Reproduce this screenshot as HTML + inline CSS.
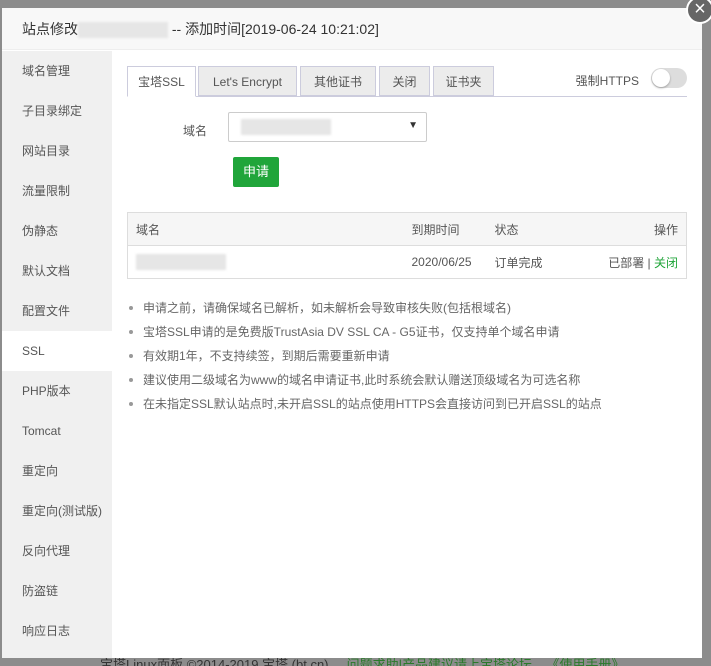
<!DOCTYPE html>
<html><head><meta charset="utf-8"><style>
*{box-sizing:border-box;margin:0;padding:0}
html,body{width:711px;height:666px;overflow:hidden}
body{background:#8c8c8c;font-family:"Liberation Sans","Noto Sans CJK SC",sans-serif;font-size:12px;color:#555;position:relative}
.modal{position:absolute;left:2px;top:8px;width:700px;height:650px;background:#fff;overflow:hidden}
.hd{height:42px;background:#f8f8f8;border-bottom:1px solid #eee;font-size:14px;color:#333;line-height:42px;padding-left:20px}
.blur{display:inline-block;width:90px;height:16px;background:#e6e6e6;vertical-align:middle;filter:blur(1px)}
.side{position:absolute;left:0;top:43px;width:110px;bottom:0;background:#f0f0f0}
.side div{height:40px;line-height:40px;padding-left:20px;font-size:12px;color:#555}
.side .on{background:#fff}
.main{position:absolute;left:125px;top:58px;width:560px;height:400px}
.tabs{height:31px;border-bottom:1px solid #ccd;position:relative}
.tab{position:absolute;top:0;height:30px;line-height:30px;text-align:center;border:1px solid #ccd;background:#ececec;font-size:12px;color:#555}
.tab.on{background:#fff;border-bottom-color:#fff;height:31px}
.sw{position:absolute;right:0;top:2px;width:36px;height:20px;border-radius:10px;background:#ddd}
.sw:after{content:"";position:absolute;left:1px;top:1px;width:18px;height:18px;border-radius:50%;background:#fff;box-shadow:0 1px 2px rgba(0,0,0,.3)}
table{border-collapse:collapse;width:560px;position:absolute;left:0;top:146px;border:1px solid #ddd}
td{height:33px;padding:0 8px;font-size:12px}
tr.h td{background:#f6f6f6;border-bottom:1px solid #ddd}
ul{position:absolute;left:0;top:235px;list-style:none}
li{height:24px;line-height:14px;padding-left:16px;position:relative;color:#666;font-size:12px}
li:before{content:"";position:absolute;left:2px;top:5px;width:4px;height:4px;border-radius:50%;background:#999}
.x{position:absolute;left:686px;top:-4px;width:28px;height:28px;border-radius:50%;background:#666;border:2px solid #fff;color:#fff;font-size:20px;line-height:22px;text-align:center}
</style></head><body>
<div style="position:absolute;left:0;top:655px;width:711px;height:11px;line-height:20px;font-size:13px;color:#333;padding-left:100px;overflow:hidden;white-space:nowrap">宝塔Linux面板 ©2014-2019 宝塔 (bt.cn) &nbsp;&nbsp;&nbsp;&nbsp;<span style="color:#2a7a2a">问题求助|产品建议请上宝塔论坛 &nbsp;&nbsp;&nbsp;《使用手册》</span></div>
<div class="modal">
<div class="hd">站点修改<span class="blur"></span> -- 添加时间[2019-06-24 10:21:02]</div>
<div class="side">
<div>域名管理</div><div>子目录绑定</div><div>网站目录</div><div>流量限制</div><div>伪静态</div><div>默认文档</div><div>配置文件</div><div class="on">SSL</div><div>PHP版本</div><div>Tomcat</div><div>重定向</div><div>重定向(测试版)</div><div>反向代理</div><div>防盗链</div><div>响应日志</div>
</div>
<div class="main">
<div class="tabs">
<div class="tab on" style="left:0;width:69px">宝塔SSL</div>
<div class="tab" style="left:71px;width:99px">Let's Encrypt</div>
<div class="tab" style="left:173px;width:76px">其他证书</div>
<div class="tab" style="left:252px;width:51px">关闭</div>
<div class="tab" style="left:306px;width:61px">证书夹</div>
<div style="position:absolute;right:48px;top:6px;color:#555">强制HTTPS</div>
<div class="sw"></div>
</div>
<div style="position:absolute;left:56px;top:56px;color:#555">域名</div>
<div style="position:absolute;left:101px;top:46px;width:199px;height:30px;border:1px solid #ccc;border-radius:2px"><span class="blur" style="margin:6px 0 0 12px;width:90px"></span><span style="position:absolute;right:8px;top:7px;font-size:10px;color:#333">▼</span></div>
<div style="position:absolute;left:106px;top:91px;width:46px;height:30px;background:#20a53a;color:#fff;border-radius:2px;text-align:center;line-height:30px;font-size:13px">申请</div>
<table>
<tr class="h"><td style="width:276px">域名</td><td style="width:83px">到期时间</td><td>状态</td><td style="text-align:right">操作</td></tr>
<tr><td><span class="blur"></span></td><td>2020/06/25</td><td>订单完成</td><td style="text-align:right">已部署 | <span style="color:#20a53a">关闭</span></td></tr>
</table>
<ul>
<li>申请之前，请确保域名已解析，如未解析会导致审核失败(包括根域名)</li>
<li>宝塔SSL申请的是免费版TrustAsia DV SSL CA - G5证书，仅支持单个域名申请</li>
<li>有效期1年，不支持续签，到期后需要重新申请</li>
<li>建议使用二级域名为www的域名申请证书,此时系统会默认赠送顶级域名为可选名称</li>
<li>在未指定SSL默认站点时,未开启SSL的站点使用HTTPS会直接访问到已开启SSL的站点</li>
</ul>
</div>
</div>
<div class="x">×</div>
</body></html>
